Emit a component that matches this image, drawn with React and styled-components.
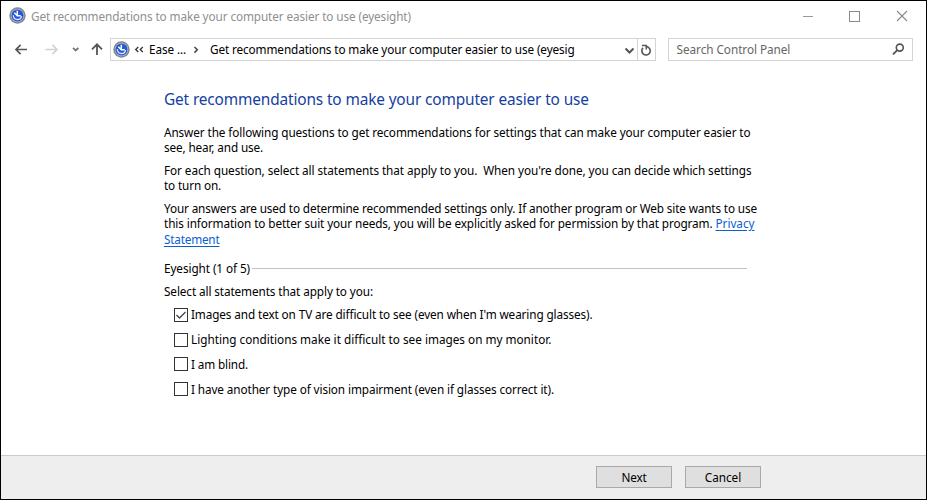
import React, { useState } from "react";
import styled, { createGlobalStyle } from "styled-components";

const GlobalStyle = createGlobalStyle`
  * { box-sizing: border-box; }
  body { margin: 0; background: #fff; }
`;

const Window = styled.main`
  width: 927px;
  height: 500px;
  display: flex;
  flex-direction: column;
  border: 1px solid #000;
  background: #fff;
  color: #000;
  font: 11.75px/16px "Noto Sans", "Open Sans", sans-serif;
  overflow: hidden;
`;

const Text = styled.span`
  display: block;
  white-space: pre;
  letter-spacing: ${(p) => p.$track || 0}px;
`;

const TitleBar = styled.header`
  height: 30px;
  display: flex;
  align-items: center;
  padding: 0 18px 1px 8px;
  color: #8f8f8f;
`;

const TitleText = styled(Text)`
  flex: 1;
  margin: 1px 0 0 5px;
`;

const WindowControls = styled.div`
  display: flex;
  align-items: center;
  gap: 35px;
  svg { display: block; }
`;

const NavBar = styled.nav`
  height: 37px;
  display: flex;
  align-items: flex-start;
  padding: 7px 13px 0 12px;
`;

const NavIcons = styled.div`
  width: 97px;
  height: 23px;
  svg { display: block; }
`;

const AddressBar = styled.div`
  width: 547px;
  height: 23px;
  display: flex;
  align-items: center;
  border: 1px solid #d4d4d4;
  padding: 0 0 1px 2px;
  svg { display: block; flex: none; }
`;

const AddressActions = styled.div`
  margin: 1px 0 0 auto;
  display: flex;
  height: 21px;
  align-items: center;
`;

const RefreshButton = styled.div`
  width: 18px;
  height: 21px;
  margin-left: 2px;
  display: flex;
  align-items: center;
  justify-content: center;
  border-left: 1px solid #d4d4d4;
`;

const SearchBox = styled.div`
  width: 246px;
  height: 23px;
  margin-left: 12px;
  padding: 0 7px 1px 8px;
  display: flex;
  align-items: center;
  justify-content: space-between;
  border: 1px solid #d4d4d4;
  color: #666;
  svg { display: block; }
`;

const Content = styled.section`
  flex: 1;
  padding: 20px 0 0 163px;
`;

const Heading = styled.h1`
  margin: 0 0 13.6px;
  font-size: 15.4px;
  line-height: 23px;
  font-weight: 400;
  color: #1540a0;
  letter-spacing: -0.136px;
`;

const Paragraph = styled.p`
  margin: 0 0 7px;
  line-height: 15.5px;
`;

const Link = styled.a`
  color: #0a5fd0;
  text-decoration: underline;
  text-underline-offset: 2px;
  letter-spacing: ${(p) => p.$track || 0}px;
`;

const Group = styled.div`
  display: flex;
  align-items: center;
  width: 583px;
  margin-top: 13.4px;
`;

const Rule = styled.hr`
  flex: 1;
  height: 1px;
  margin: 1px 0 0 2px;
  border: 0;
  background: #c2c2c2;
`;

const Prompt = styled(Text)`
  margin-top: 7px;
`;

const OptionList = styled.div`
  display: flex;
  flex-direction: column;
  gap: 8.7px;
  padding: 7px 0 0 10px;
`;

const Option = styled.div`
  display: flex;
  align-items: center;
  gap: 3px;
  height: 16px;
`;

const Box = styled.span`
  width: 14px;
  height: 14px;
  flex: none;
  margin-top: 1px;
  border: 1px solid #333;
  background: #fff;
  svg { display: block; }
`;

const Footer = styled.footer`
  height: 44px;
  display: flex;
  align-items: flex-start;
  gap: 13px;
  padding: 10px 0 0 595px;
  border-top: 1px solid #cbcbcb;
  background: #eee;
`;

const Button = styled.button`
  width: 76px;
  height: 22px;
  padding: 0 0 1px;
  border: 1px solid #a9a9a9;
  border-radius: 0;
  background: #dfdfdf;
  color: #000;
  font: inherit;
  line-height: 16px;
  letter-spacing: ${(p) => p.$track || 0}px;
`;

const EaseIcon = () => (
  <svg width="17" height="17" viewBox="0 0 17 17" fill="none">
    <circle cx="8.5" cy="8.5" r="8.2" fill="#85858a" />
    <circle cx="8.5" cy="8.5" r="6.7" fill="#b4bdd6" />
    <circle cx="8.5" cy="8.5" r="6" fill="#2459d6" />
    <path d="M4.3 8.2c.2 2.7 1.900 4.300 4.200 4.300 2.200 0 3.700-1.400 4-3.400" stroke="#dfe9ff" strokeWidth="1.3" />
    <path d="M8.3 3.800v5h3.500M5.300 5.800l3 3" stroke="#fff" strokeWidth="1.5" />
  </svg>
);

const NavigationIcons = () => (
  <svg width="97" height="23" viewBox="0 0 97 23" fill="none">
    <path d="M14 11.500H3M7.600 6.900L3 11.500l4.600 4.600" stroke="#555" strokeWidth="1.7" />
    <path d="M32.500 11.500H44M39.400 6.900l4.600 4.600-4.600 4.600" stroke="#d2d2d2" strokeWidth="1.6" />
    <path d="M60 9.800l2.700 2.700 2.700-2.700" stroke="#777" strokeWidth="1.8" />
    <path d="M84 17V6.500M79 11.300l5-5 5 5" stroke="#555" strokeWidth="1.8" />
  </svg>
);

const options = [
  { text: "Images and text on TV are difficult to see (even when I'm wearing glasses).", track: -0.11 },
  { text: "Lighting conditions make it difficult to see images on my monitor.", track: 0 },
  { text: "I am blind.", track: -0.14 },
  { text: "I have another type of vision impairment (even if glasses correct it).", track: -0.1 },
];

export default function App() {
  const [checked, setChecked] = useState([true, false, false, false]);
  const toggle = (i) => setChecked(checked.map((c, n) => (n === i ? !c : c)));

  return (
    <>
      <GlobalStyle />
      <Window>
        <TitleBar>
          <EaseIcon />
          <TitleText $track={-0.1}>Get recommendations to make your computer easier to use (eyesight)</TitleText>
          <WindowControls>
            <svg width="12" height="12" viewBox="0 0 12 12"><path d="M1 6.500h10" stroke="#999" /></svg>
            <svg width="12" height="12" viewBox="0 0 12 12" fill="none"><rect x="0.5" y="1.5" width="10" height="10" stroke="#8a8a8a" /></svg>
            <svg width="12" height="12" viewBox="0 0 12 12"><path d="M1 1l10 10M11 1L1 11" stroke="#8a8a8a" strokeWidth="1.1" /></svg>
          </WindowControls>
        </TitleBar>

        <NavBar>
          <NavIcons><NavigationIcons /></NavIcons>
          <AddressBar>
            <EaseIcon />
            <svg width="19" height="21" viewBox="0 0 19 21" fill="none">
              <path d="M8.300 8l-2.600 2.500 2.600 2.500M12.800 8l-2.600 2.500 2.600 2.500" stroke="#333" strokeWidth="1.3" />
            </svg>
            <Text $track={-0.11}>Ease ...</Text>
            <svg width="24" height="21" viewBox="0 0 24 21" fill="none">
              <path d="M8.500 8l2.800 2.800-2.800 2.800" stroke="#444" strokeWidth="1.5" />
            </svg>
            <Text $track={-0.11}>Get recommendations to make your computer easier to use (eyesig</Text>
            <AddressActions>
              <svg width="11" height="10" viewBox="0 0 11 10" fill="none">
                <path d="M1.500 3.500l4 4 4-4" stroke="#555" strokeWidth="2" />
              </svg>
              <RefreshButton>
                <svg width="12" height="14" viewBox="0 0 12 14" fill="none">
                  <path d="M3 4.900a4.200 4.200 0 1 0 5-.8L6 3.500" stroke="#555" strokeWidth="1.6" />
                  <path d="M2 2.500h4.300v4" stroke="#555" strokeWidth="1.5" />
                </svg>
              </RefreshButton>
            </AddressActions>
          </AddressBar>
          <SearchBox>
            <Text $track={-0.05}>Search Control Panel</Text>
            <svg width="14" height="14" viewBox="0 0 14 14" fill="none">
              <circle cx="8.8" cy="5.6" r="3.5" stroke="#555" strokeWidth="1.6" />
              <path d="M6.300 8.100L2 12.400" stroke="#555" strokeWidth="1.9" />
            </svg>
          </SearchBox>
        </NavBar>

        <Content>
          <Heading>Get recommendations to make your computer easier to use</Heading>
          <Paragraph>
            <Text $track={-0.095}>Answer the following questions to get recommendations for settings that can make your computer easier to</Text>
            <Text $track={-0.13}>see, hear, and use.</Text>
          </Paragraph>
          <Paragraph>
            <Text $track={-0.064}>{"For each question, select all statements that apply to you.  When you're done, you can decide which settings"}</Text>
            <Text $track={-0.14}>to turn on.</Text>
          </Paragraph>
          <Paragraph>
            <Text $track={-0.139}>Your answers are used to determine recommended settings only. If another program or Web site wants to use</Text>
            <Text $track={-0.097}>
              {"this information to better suit your needs, you will be explicitly asked for permission by that program. "}
              <Link $track={-0.02}>Privacy</Link>
            </Text>
            <Link $track={-0.2}>Statement</Link>
          </Paragraph>
          <Group>
            <Text $track={-0.078}>Eyesight (1 of 5)</Text>
            <Rule />
          </Group>
          <Prompt $track={-0.1}>Select all statements that apply to you:</Prompt>
          <OptionList>
            {options.map((o, i) => (
              <Option key={o.text} role="checkbox" aria-checked={checked[i]} onClick={() => toggle(i)}>
                <Box>
                  {checked[i] && (
                    <svg width="12" height="12" viewBox="0 0 12 12" fill="none">
                      <path d="M1.500 6l3 3L10.500 3" stroke="#444" strokeWidth="1.3" />
                    </svg>
                  )}
                </Box>
                <Text $track={o.track}>{o.text}</Text>
              </Option>
            ))}
          </OptionList>
        </Content>

        <Footer>
          <Button $track={-0.2}>Next</Button>
          <Button>Cancel</Button>
        </Footer>
      </Window>
    </>
  );
}
